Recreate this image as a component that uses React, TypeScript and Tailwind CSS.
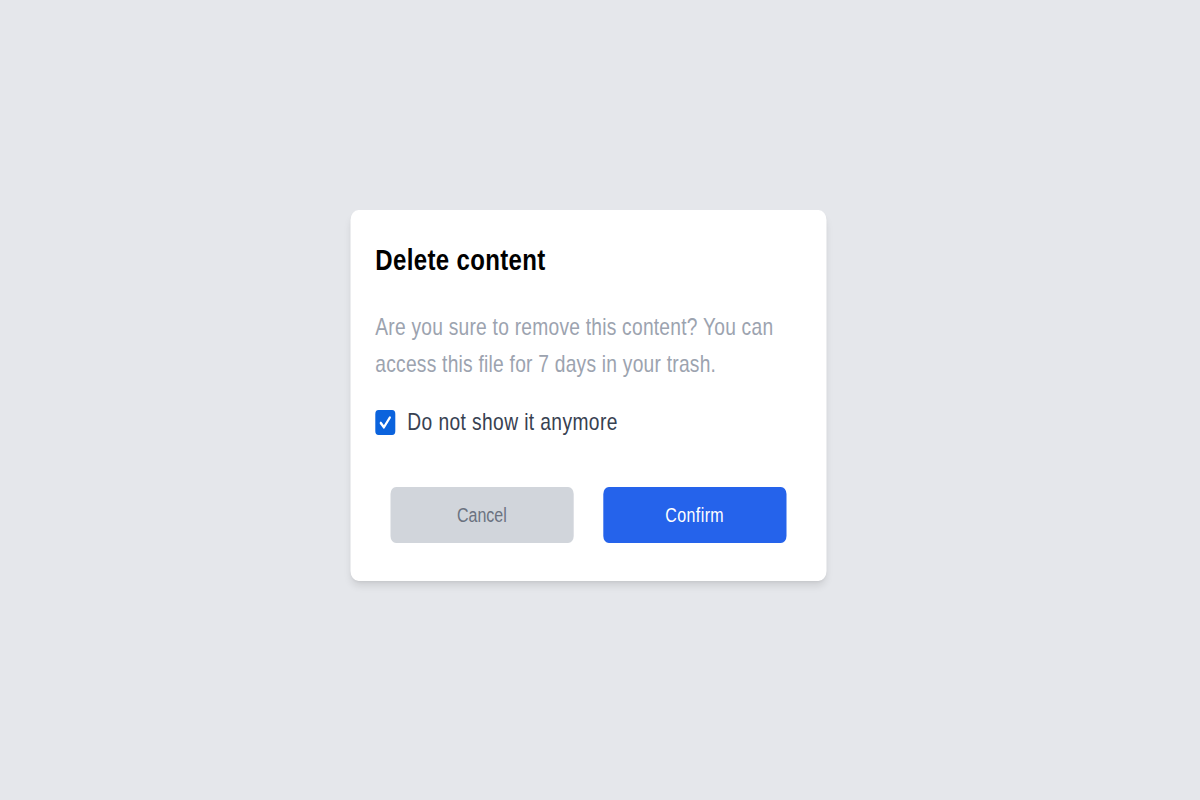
import { useState } from 'react';

const font = "font-['Liberation_Sans',Arial,sans-serif]";

export default function App() {
  const [hide, setHide] = useState(true);

  return (
    <div className={`min-h-screen w-full bg-[#e5e7eb] flex items-start justify-center pt-[210px] pr-[24px] ${font}`}>
      {/* the reference is a horizontally condensed capture, so the dialog is drawn at 0.8 width */}
      <div className="w-[595px] shrink-0 scale-x-[0.8] bg-white rounded-[10px] shadow-[0_6px_10px_-2px_rgba(0,0,0,0.12),0_2px_4px_-2px_rgba(0,0,0,0.08)] pt-[32px] pb-[38px] px-[31px]">
        <h2 className="text-[30px] leading-[36px] font-bold tracking-[0.45px] text-black">Delete content</h2>

        <p className="mt-[30px] text-[24px] leading-[37px] tracking-[0.3px] text-[#9ca3af]">
          Are you sure to remove this content? You can access this file for 7 days in your trash.
        </p>

        {/* Checkbox */}
        <label
          className="mt-[22px] flex items-center gap-[15px] cursor-pointer select-none"
          onClick={() => setHide(!hide)}
        >
          <span
            className={`w-[25px] h-[25px] rounded-[4px] flex items-center justify-center ${
              hide ? 'bg-[#0b63dd]' : 'bg-white border-2 border-gray-500'
            }`}
          >
            {hide && (
              <svg viewBox="0 0 20 20" className="w-[19px] h-[19px]" fill="none">
                <path
                  d="M4 10.5 L8.2 15 L16 4.8"
                  stroke="white"
                  strokeWidth="2.8"
                  strokeLinecap="round"
                  strokeLinejoin="round"
                />
              </svg>
            )}
          </span>
          <span className="text-[24px] leading-[36px] tracking-[0.5px] text-[#374151]">Do not show it anymore</span>
        </label>

        {/* Actions */}
        <div className="mt-[47px] px-[19px] flex gap-[37px]">
          <button className="w-[229px] h-[56px] rounded-[7px] bg-[#d1d5db] text-[#6b7280] text-[20px]">
            Cancel
          </button>
          <button className="w-[230px] h-[56px] rounded-[7px] bg-[#2563eb] text-white text-[20px] tracking-[0.5px]">
            Confirm
          </button>
        </div>
      </div>
    </div>
  );
}
